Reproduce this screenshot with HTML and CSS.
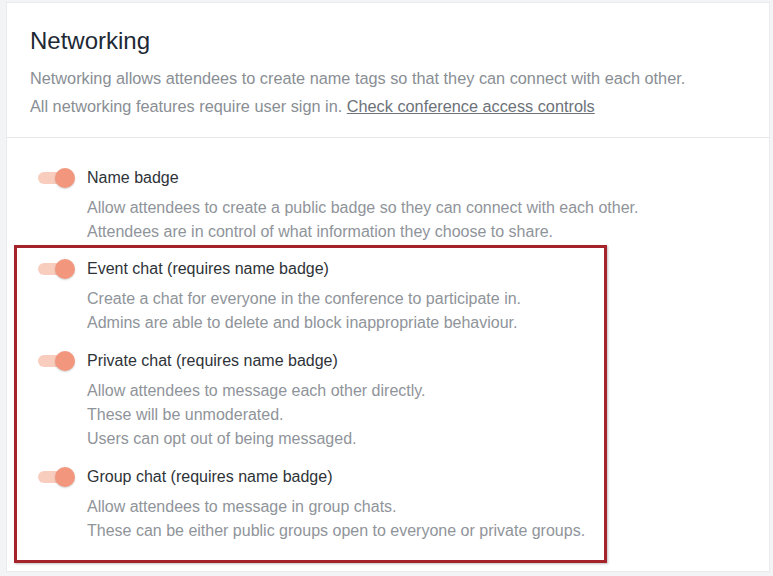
FILE: index.html
```html
<!DOCTYPE html>
<html>
<head>
<meta charset="utf-8">
<link rel="stylesheet" href="styles.css">
</head>
<body>
<div class="card">
  <div class="header">
    <h1 class="title">Networking</h1>
    <p class="intro">Networking allows attendees to create name tags so that they can connect with each other.<br>All networking features require user sign in. <a class="link" href="#">Check conference access controls</a></p>
  </div>
  <div class="list">
    <div class="item item-plain">
      <div class="row"><span class="toggle"><span class="knob"></span></span><span class="label">Name badge</span></div>
      <div class="desc">Allow attendees to create a public badge so they can connect with each other.<br>Attendees are in control of what information they choose to share.</div>
    </div>
    <div class="highlight">
      <div class="item">
        <div class="row"><span class="toggle"><span class="knob"></span></span><span class="label">Event chat (requires name badge)</span></div>
        <div class="desc">Create a chat for everyone in the conference to participate in.<br>Admins are able to delete and block inappropriate behaviour.</div>
      </div>
      <div class="item">
        <div class="row"><span class="toggle"><span class="knob"></span></span><span class="label">Private chat (requires name badge)</span></div>
        <div class="desc">Allow attendees to message each other directly.<br>These will be unmoderated.<br>Users can opt out of being messaged.</div>
      </div>
      <div class="item">
        <div class="row"><span class="toggle"><span class="knob"></span></span><span class="label">Group chat (requires name badge)</span></div>
        <div class="desc">Allow attendees to message in group chats.<br>These can be either public groups open to everyone or private groups.</div>
      </div>
    </div>
  </div>
</div>
</body>
</html>
```
FILE: styles.css
```css
html, body {
  margin: 0;
  padding: 0;
}
body {
  background: #f3f4f6;
  font-family: "Liberation Sans", Arial, sans-serif;
  height: 576px;
  overflow: hidden;
}
.card {
  margin: 2px 3px 0 6px;
  background: #ffffff;
  border: 1px solid #e9ebee;
  height: 570px;
  box-sizing: border-box;
}
.header {
  padding: 24px 23px 17px;
  border-bottom: 1px solid #e6e8eb;
}
.title {
  margin: 0;
  font-size: 24px;
  line-height: 28px;
  font-weight: normal;
  color: #1d2935;
}
.intro {
  margin: 9px 0 0;
  font-size: 16.3px;
  line-height: 28px;
  color: #898e94;
}
.link {
  color: #6c7279;
  text-decoration: underline;
}
.list {
  padding-top: 28px;
}
.item-plain {
  padding-left: 31px;
}
.highlight {
  margin: 1px 0 0 7px;
  width: 593px;
  box-sizing: border-box;
  border: 3px solid #a5232a;
  padding: 9px 0 17px 21px;
  box-shadow: 1px 1px 2px rgba(0, 0, 0, 0.25);
}
.item + .item {
  margin-top: 14px;
}
.row {
  display: flex;
  align-items: center;
  gap: 12px;
  height: 24px;
}
.toggle {
  position: relative;
  width: 37px;
  height: 20px;
  flex: none;
}
.toggle::before {
  content: "";
  position: absolute;
  left: 0;
  top: 4px;
  width: 30px;
  height: 12px;
  border-radius: 6px;
  background: #f9cdbd;
}
.knob {
  position: absolute;
  right: 0;
  top: 0;
  width: 20px;
  height: 20px;
  border-radius: 50%;
  background: #f2977d;
  box-shadow: 0 1px 2px rgba(0, 0, 0, 0.18);
}
.label {
  font-size: 16px;
  line-height: 24px;
  color: #2e3338;
}
.desc {
  margin-top: 6px;
  padding-left: 49px;
  font-size: 16px;
  line-height: 24px;
  color: #8f949a;
}
```
